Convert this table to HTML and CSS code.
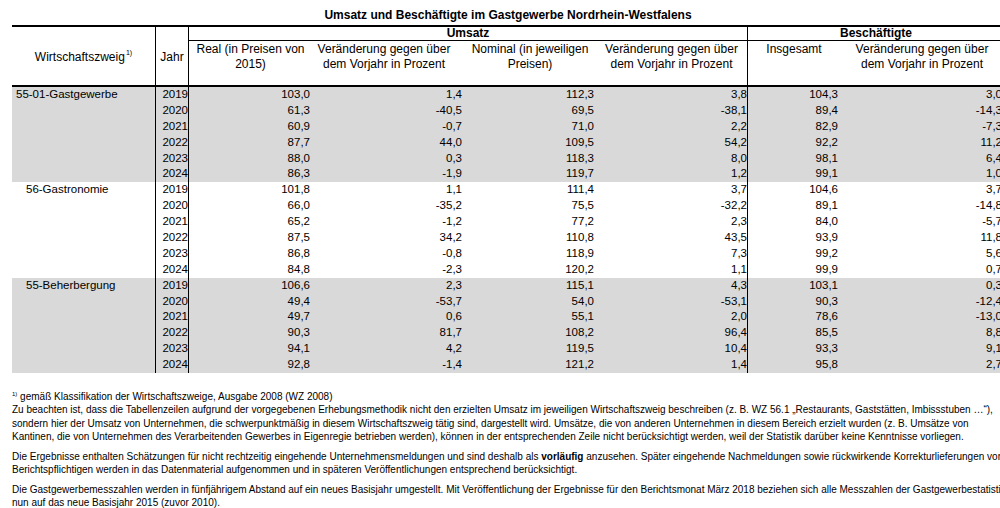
FILE: index.html
```html
<!DOCTYPE html>
<html lang="de">
<head>
<meta charset="utf-8">
<title>Umsatz und Beschäftigte im Gastgewerbe Nordrhein-Westfalens</title>
<link rel="stylesheet" href="styles.css">
</head>
<body>
<div class="sheet">
  <div class="title">Umsatz und Beschäftigte im Gastgewerbe Nordrhein-Westfalens</div>
  <div class="table">
    <div class="head">
      <div class="h-branch"><span>Wirtschaftszweig<sup>1)</sup></span></div>
      <div class="h-year">Jahr</div>
      <div class="h-group h-umsatz">Umsatz</div>
      <div class="h-group h-besch">Beschäftigte</div>
      <div class="h-col">Real (in Preisen von<br>2015)</div>
      <div class="h-col h-c4">Veränderung gegen über<br>dem Vorjahr in Prozent</div>
      <div class="h-col h-wide">Nominal (in jeweiligen<br>Preisen)</div>
      <div class="h-col h-sep">Veränderung gegen über<br>dem Vorjahr in Prozent</div>
      <div class="h-col">Insgesamt</div>
      <div class="h-col">Veränderung gegen über<br>dem Vorjahr in Prozent</div>
    </div>

    <div class="row shade"><div class="c-branch">55-01-Gastgewerbe</div><div class="c-year">2019</div><div class="num">103,0</div><div class="num">1,4</div><div class="num">112,3</div><div class="num sep">3,8</div><div class="num">104,3</div><div class="num">3,0</div></div>
    <div class="row shade"><div class="c-branch"></div><div class="c-year">2020</div><div class="num">61,3</div><div class="num">-40,5</div><div class="num">69,5</div><div class="num sep">-38,1</div><div class="num">89,4</div><div class="num">-14,3</div></div>
    <div class="row shade"><div class="c-branch"></div><div class="c-year">2021</div><div class="num">60,9</div><div class="num">-0,7</div><div class="num">71,0</div><div class="num sep">2,2</div><div class="num">82,9</div><div class="num">-7,3</div></div>
    <div class="row shade"><div class="c-branch"></div><div class="c-year">2022</div><div class="num">87,7</div><div class="num">44,0</div><div class="num">109,5</div><div class="num sep">54,2</div><div class="num">92,2</div><div class="num">11,2</div></div>
    <div class="row shade"><div class="c-branch"></div><div class="c-year">2023</div><div class="num">88,0</div><div class="num">0,3</div><div class="num">118,3</div><div class="num sep">8,0</div><div class="num">98,1</div><div class="num">6,4</div></div>
    <div class="row shade"><div class="c-branch"></div><div class="c-year">2024</div><div class="num">86,3</div><div class="num">-1,9</div><div class="num">119,7</div><div class="num sep">1,2</div><div class="num">99,1</div><div class="num">1,0</div></div>

    <div class="row"><div class="c-branch sub">56-Gastronomie</div><div class="c-year">2019</div><div class="num">101,8</div><div class="num">1,1</div><div class="num">111,4</div><div class="num sep">3,7</div><div class="num">104,6</div><div class="num">3,7</div></div>
    <div class="row"><div class="c-branch"></div><div class="c-year">2020</div><div class="num">66,0</div><div class="num">-35,2</div><div class="num">75,5</div><div class="num sep">-32,2</div><div class="num">89,1</div><div class="num">-14,8</div></div>
    <div class="row"><div class="c-branch"></div><div class="c-year">2021</div><div class="num">65,2</div><div class="num">-1,2</div><div class="num">77,2</div><div class="num sep">2,3</div><div class="num">84,0</div><div class="num">-5,7</div></div>
    <div class="row"><div class="c-branch"></div><div class="c-year">2022</div><div class="num">87,5</div><div class="num">34,2</div><div class="num">110,8</div><div class="num sep">43,5</div><div class="num">93,9</div><div class="num">11,8</div></div>
    <div class="row"><div class="c-branch"></div><div class="c-year">2023</div><div class="num">86,8</div><div class="num">-0,8</div><div class="num">118,9</div><div class="num sep">7,3</div><div class="num">99,2</div><div class="num">5,6</div></div>
    <div class="row"><div class="c-branch"></div><div class="c-year">2024</div><div class="num">84,8</div><div class="num">-2,3</div><div class="num">120,2</div><div class="num sep">1,1</div><div class="num">99,9</div><div class="num">0,7</div></div>

    <div class="row shade"><div class="c-branch sub">55-Beherbergung</div><div class="c-year">2019</div><div class="num">106,6</div><div class="num">2,3</div><div class="num">115,1</div><div class="num sep">4,3</div><div class="num">103,1</div><div class="num">0,3</div></div>
    <div class="row shade"><div class="c-branch"></div><div class="c-year">2020</div><div class="num">49,4</div><div class="num">-53,7</div><div class="num">54,0</div><div class="num sep">-53,1</div><div class="num">90,3</div><div class="num">-12,4</div></div>
    <div class="row shade"><div class="c-branch"></div><div class="c-year">2021</div><div class="num">49,7</div><div class="num">0,6</div><div class="num">55,1</div><div class="num sep">2,0</div><div class="num">78,6</div><div class="num">-13,0</div></div>
    <div class="row shade"><div class="c-branch"></div><div class="c-year">2022</div><div class="num">90,3</div><div class="num">81,7</div><div class="num">108,2</div><div class="num sep">96,4</div><div class="num">85,5</div><div class="num">8,8</div></div>
    <div class="row shade"><div class="c-branch"></div><div class="c-year">2023</div><div class="num">94,1</div><div class="num">4,2</div><div class="num">119,5</div><div class="num sep">10,4</div><div class="num">93,3</div><div class="num">9,1</div></div>
    <div class="row shade"><div class="c-branch"></div><div class="c-year">2024</div><div class="num">92,8</div><div class="num">-1,4</div><div class="num">121,2</div><div class="num sep">1,4</div><div class="num">95,8</div><div class="num">2,7</div></div>
  </div>

  <div class="notes">
    <p><sup>1)</sup> gemäß Klassifikation der Wirtschaftszweige, Ausgabe 2008 (WZ 2008)<br>Zu beachten ist, dass die Tabellenzeilen aufgrund der vorgegebenen Erhebungsmethodik nicht den erzielten Umsatz im jeweiligen Wirtschaftszweig beschreiben (z. B. WZ 56.1 „Restaurants, Gaststätten, Imbissstuben …“),<br>sondern hier der Umsatz von Unternehmen, die schwerpunktmäßig in diesem Wirtschaftszweig tätig sind, dargestellt wird. Umsätze, die von anderen Unternehmen in diesem Bereich erzielt wurden (z. B. Umsätze von<br>Kantinen, die von Unternehmen des Verarbeitenden Gewerbes in Eigenregie betrieben werden), können in der entsprechenden Zeile nicht berücksichtigt werden, weil der Statistik darüber keine Kenntnisse vorliegen.</p>
    <p>Die Ergebnisse enthalten Schätzungen für nicht rechtzeitig eingehende Unternehmensmeldungen und sind deshalb als <b>vorläufig</b> anzusehen. Später eingehende Nachmeldungen sowie rückwirkende Korrekturlieferungen von<br>Berichtspflichtigen werden in das Datenmaterial aufgenommen und in späteren Veröffentlichungen entsprechend berücksichtigt.</p>
    <p>Die Gastgewerbemesszahlen werden in fünfjährigem Abstand auf ein neues Basisjahr umgestellt. Mit Veröffentlichung der Ergebnisse für den Berichtsmonat März 2018 beziehen sich alle Messzahlen der Gastgewerbestatistik<br>nun auf das neue Basisjahr 2015 (zuvor 2010).</p>
  </div>
</div>
</body>
</html>
```

FILE: styles.css
```css
:root {
  --cols: 144px 33px 123px 152px 132px 152px 92px 164px;
  --line: #000;
}

* { box-sizing: border-box; }

html, body {
  margin: 0;
  background: #fff;
  overflow: hidden;
}

body {
  font-family: "Liberation Sans", Arial, sans-serif;
  color: #000;
}

.sheet {
  padding-left: 12px;
  width: 1004px;
}

.title {
  height: 25px;
  padding-top: 8px;
  font-size: 12px;
  line-height: 15px;
  font-weight: bold;
  text-align: center;
  white-space: nowrap;
}

.table {
  border-top: 2px solid var(--line);
  width: 992px;
}

.head {
  display: grid;
  grid-template-columns: var(--cols);
  grid-template-rows: 14px 44px;
  border-bottom: 2px solid var(--line);
  font-size: 12px;
}

.h-branch,
.h-year {
  grid-row: 1 / 3;
  display: flex;
  align-items: center;
  justify-content: center;
  border-right: 1px solid var(--line);
  white-space: nowrap;
}
.h-branch { grid-column: 1; padding-top: 2px; }
.h-year { grid-column: 2; padding-top: 2px; }

.h-branch sup {
  font-size: 7px;
  vertical-align: 6px;
  line-height: 0;
  margin-left: 1px;
}

.h-group {
  font-weight: bold;
  text-align: center;
  line-height: 13px;
  border-bottom: 1px solid var(--line);
}
.h-umsatz { grid-column: 3 / 7; border-right: 1px solid var(--line); }
.h-besch { grid-column: 7 / 9; }

.h-col {
  display: flex;
  justify-content: center;
  text-align: center;
  line-height: 15px;
  padding-top: 1px;
  white-space: nowrap;
}
.h-c4 { padding-right: 8px; }
.h-sep { border-right: 1px solid var(--line); }

.row {
  display: grid;
  grid-template-columns: var(--cols);
  height: 15.9px;
  font-size: 11.5px;
  line-height: 15.9px;
  white-space: nowrap;
}
.shade { background: #d9d9d9; }

.c-branch {
  padding-left: 4px;
  border-right: 1px solid var(--line);
}
.c-branch.sub { padding-left: 14px; }

.c-year {
  text-align: right;
  border-right: 1px solid var(--line);
}

.num {
  text-align: right;
  padding-right: 2px;
}
.num.sep {
  padding-right: 0;
  border-right: 1px solid var(--line);
}

.notes {
  margin-top: 17px;
  font-size: 10px;
  line-height: 13.3px;
}
.notes p {
  margin: 0 0 6.5px;
  white-space: nowrap;
}
.notes sup {
  font-size: 6px;
  vertical-align: 4px;
  line-height: 0;
}
```
